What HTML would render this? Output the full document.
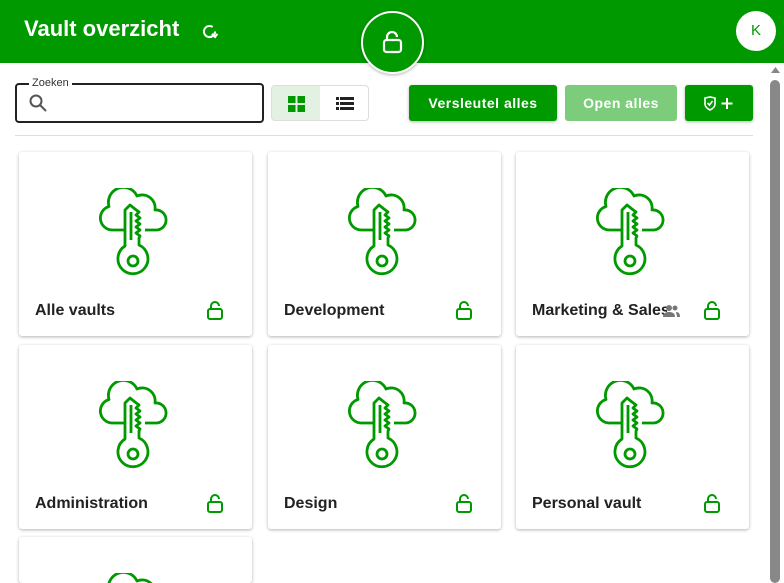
<!DOCTYPE html><html><head><style>
html{overflow:hidden;height:583px}
body{margin:0;width:784px;height:583px;overflow:hidden;background:#fff;font-family:"Liberation Sans",sans-serif;position:relative}
.hdr{position:absolute;left:0;top:0;width:784px;height:63px;background:#009900}
.title{position:absolute;left:24px;top:16px;color:#fff;font-weight:bold;font-size:22px}
.lockc{position:absolute;left:361px;top:11px;width:59px;height:59px;border:2px solid #fff;border-radius:50%;background:#009900;box-shadow:0 1px 3px rgba(0,0,0,.3)}
.av{position:absolute;left:736px;top:11px;width:40px;height:40px;border-radius:50%;background:#fff;color:#009900;font-size:15px;text-align:center;line-height:40px}
.search{position:absolute;left:15px;top:83px;width:245px;height:36px;border:2px solid #222;border-radius:4px}
.search span{position:absolute;left:12px;top:-8px;background:#fff;padding:0 3px;font-size:11px;color:#333}
.tog{position:absolute;left:271px;top:85px;width:96px;height:34px;border:1px solid #ddd;border-radius:4px;overflow:hidden}
.btn{position:absolute;top:85px;height:36px;border-radius:3px;color:#fff;font-weight:bold;font-size:14px;text-align:center;line-height:37px;letter-spacing:.5px;box-shadow:0 1px 3px rgba(0,0,0,.3)}
.hr{position:absolute;left:15px;top:135px;width:738px;height:1px;background:#ddd}
.card{position:absolute;width:233px;height:184px;background:#fff;border-radius:3px;box-shadow:0 1px 3px rgba(0,0,0,.3)}
.card svg.k{position:absolute;left:80px;top:36px}
.card .n{position:absolute;left:16px;top:150px;font-weight:bold;font-size:16px;color:#222;white-space:nowrap}
.card svg.l{position:absolute;left:188px;top:149px}
.sb{position:absolute;left:770px;top:80px;width:10px;height:503px;background:#888;border-radius:5px}
</style></head><body>
<div class="hdr"></div>
<div class="title">Vault overzicht</div>
<svg style="position:absolute;left:200px;top:22px" width="19" height="19" viewBox="0 0 24 24" fill="none" stroke="#fff" stroke-width="2.5"><path d="M19 12a7 7 0 1 1-3-5.7"/><path d="M12 19a7 7 0 0 0 7-7" /><path d="M15 15l4 4 3-4" /></svg>
<div class="lockc"><svg style="position:absolute;left:19px;top:17px" width="21" height="24" viewBox="0 0 21 24" fill="none" stroke="#fff" stroke-width="2.2"><rect x="2" y="10" width="17" height="12" rx="2.5"/><path d="M5 10V7a5 5 0 0 1 10 0"/></svg></div>
<div class="av">K</div>
<div class="search"><span>Zoeken</span><svg style="position:absolute;left:12px;top:9px" width="19" height="19" viewBox="0 0 19 19" fill="none" stroke="#555" stroke-width="2"><circle cx="7" cy="7" r="5.5"/><path d="M11 11l6 6"/></svg></div>
<div class="tog"><div style="position:absolute;left:0;top:0;width:48px;height:34px;background:#e2f1e2"></div>
<svg style="position:absolute;left:16px;top:10px" width="17" height="16"><rect x="0" y="0" width="7.5" height="7" fill="#009900"/><rect x="9.5" y="0" width="7.5" height="7" fill="#009900"/><rect x="0" y="9" width="7.5" height="7" fill="#009900"/><rect x="9.5" y="9" width="7.5" height="7" fill="#009900"/></svg>
<svg style="position:absolute;left:64px;top:11px" width="18" height="13" fill="#222"><rect x="0" y="0" width="3" height="3"/><rect x="4" y="0" width="14" height="3"/><rect x="0" y="5" width="3" height="3"/><rect x="4" y="5" width="14" height="3"/><rect x="0" y="10" width="3" height="3"/><rect x="4" y="10" width="14" height="3"/></svg></div>
<div class="btn" style="left:409px;width:148px;background:#009900">Versleutel alles</div>
<div class="btn" style="left:565px;width:112px;background:#7ccc7c;box-shadow:none">Open alles</div>
<div class="btn" style="left:685px;width:68px;background:#009900"><svg style="position:absolute;left:18px;top:11px" width="32" height="15" fill="none" stroke="#fff" stroke-width="1.6"><path d="M2 2l5-1 5 1v6c0 3-3 5-5 6-2-1-5-3-5-6z"/><path d="M4.5 7l2 2 3-4"/><path d="M24 2v11M18.5 7.5h11" stroke-width="2"/></svg></div>
<div class="hr"></div>
<div class="sb"></div>
<svg style="position:absolute;left:771px;top:67px" width="9" height="7"><path d="M0 6L4.5 0 9 6z" fill="#888"/></svg>
<svg width="0" height="0" style="position:absolute"><defs>
<g id="key" fill="none" stroke="#009900" stroke-width="2.8" stroke-linejoin="round">
<path d="M25 42H13A12 12 0 0 1 10 18.5A15 15 0 0 1 38 8A13 13 0 0 1 56 22A10 10 0 0 1 58 42H46"/>
<path d="M26 58V22L31 17L36 21L40 24L37 27L41 30L37 33L41 36L37 39L41 42L37 45L41 48L40 50V57A15 15 0 1 1 26 58Z"/>
<path d="M32 24V52"/>
<circle cx="34" cy="73" r="5"/>
</g>
<g id="lk" fill="none" stroke="#009900" stroke-width="2"><rect x="1" y="8" width="14" height="10" rx="2"/><path d="M4 8V5a4 4 0 0 1 8 0"/></g>
</defs></svg>
<div class="card" style="left:19px;top:152px"><svg class="k" width="70" height="90" viewBox="0 0 70 90"><use href="#key"/></svg><div class="n">Alle vaults</div><svg class="l" width="17" height="20"><use href="#lk"/></svg></div>
<div class="card" style="left:268px;top:152px"><svg class="k" width="70" height="90" viewBox="0 0 70 90"><use href="#key"/></svg><div class="n">Development</div><svg class="l" width="17" height="20"><use href="#lk"/></svg></div>
<div class="card" style="left:516px;top:152px;overflow:hidden"><svg class="k" width="70" height="90" viewBox="0 0 70 90"><use href="#key"/></svg><div class="n" style="width:135px;overflow:hidden">Marketing &amp; Sales</div><svg style="position:absolute;left:147px;top:153px" width="17" height="12" fill="#777"><circle cx="6" cy="3" r="3"/><path d="M0 12c0-4 3-5 6-5s6 1 6 5z"/><circle cx="12" cy="3" r="2.5"/><path d="M13 7c3 0 4 2 4 5h-3c0-2-1-4-1-5z"/></svg><svg class="l" width="17" height="20"><use href="#lk"/></svg></div>
<div class="card" style="left:19px;top:345px"><svg class="k" width="70" height="90" viewBox="0 0 70 90"><use href="#key"/></svg><div class="n">Administration</div><svg class="l" width="17" height="20"><use href="#lk"/></svg></div>
<div class="card" style="left:268px;top:345px"><svg class="k" width="70" height="90" viewBox="0 0 70 90"><use href="#key"/></svg><div class="n">Design</div><svg class="l" width="17" height="20"><use href="#lk"/></svg></div>
<div class="card" style="left:516px;top:345px"><svg class="k" width="70" height="90" viewBox="0 0 70 90"><use href="#key"/></svg><div class="n">Personal vault</div><svg class="l" width="17" height="20"><use href="#lk"/></svg></div>
<div class="card" style="left:19px;top:537px;height:46px;overflow:hidden"><svg class="k" width="70" height="90" viewBox="0 0 70 90"><use href="#key"/></svg></div>
</body></html>
